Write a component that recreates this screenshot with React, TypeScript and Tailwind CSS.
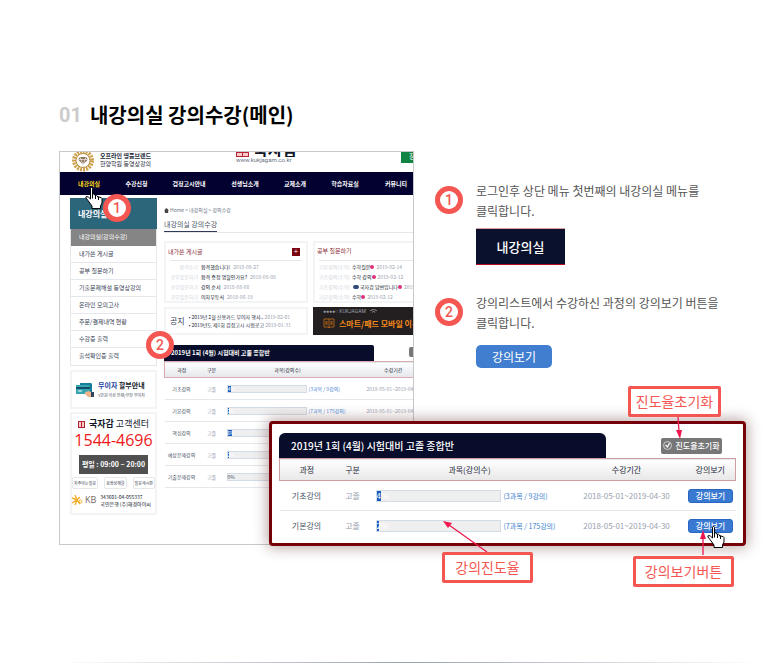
import { ReactNode } from "react";

interface Course {
  name: string;
  level: string;
  progress: string;
  percent: number;
  count: string;
  period: string;
}

const menus = [
  { label: "내강의실", width: "w-[52px]" },
  { label: "수강신청", width: "w-[43px]" },
  { label: "검정고시안내", width: "w-[62px]" },
  { label: "선생님소개", width: "w-[50px]" },
  { label: "교제소개", width: "w-[50px]" },
  { label: "학습자료실", width: "w-[50px]" },
  { label: "커뮤니티", width: "w-[52px]" },
];

const sideMenus = [
  "내가쓴 게시글",
  "공부 질문하기",
  "기출문제해설 동영상강의",
  "온라인 모의고사",
  "주문/결제내역 현황",
  "수강증 출력",
  "출석확인증 출력",
];

const myPosts = [
  { type: "합격수기", title: "합격했습니다!", date: "2018-08-27" },
  { type: "공부질문하기", title: "합격 증정 명찰인가요?", date: "2018-08-08" },
  { type: "공부질문하기", title: "강의 순서", date: "2018-08-08" },
  { type: "공부질문하기", title: "이차부등식", date: "2018-06-19" },
];

const questions = [
  { type: "기본강의(수학)", title: "수학질문", date: "2019-02-14", reply: false },
  { type: "기초강의(수학)", title: "수학 강의", date: "2019-02-12", reply: false },
  { type: "기초강의(수학)", title: "국자감 답변입니다", date: "2019-02-13", reply: true },
  { type: "기본강의(수학)", title: "수학", date: "2019-02-12", reply: false },
];

const courses: Course[] = [
  { name: "기초강의", level: "고졸", progress: "4%", percent: 4, count: "(3과목 / 9강의)", period: "2018-05-01~2019-04-30" },
  { name: "기본강의", level: "고졸", progress: "2%", percent: 2, count: "(7과목 / 175강의)", period: "2018-05-01~2019-04-30" },
  { name: "핵심강의", level: "고졸", progress: "6%", percent: 6, count: "(7과목 / 98강의)", period: "2018-05-01~2019-04-30" },
  { name: "예상문제강의", level: "고졸", progress: "2%", percent: 2, count: "(7과목 / 84강의)", period: "2018-05-01~2019-04-30" },
  { name: "기출문제강의", level: "고졸", progress: "0%", percent: 0, count: "(7과목 / 84강의)", period: "2018-05-01~2019-04-30" },
];

const StepBadge = ({ children }: { children: ReactNode }) => (
  <span className="flex size-7 shrink-0 items-center justify-center rounded-full border-5 border-[#f45752] bg-white font-[Roboto,sans-serif] text-sm font-medium leading-none text-[#f45752]">
    {children}
  </span>
);

const Callout = ({ children }: { children: ReactNode }) => (
  <p className="whitespace-nowrap rounded-xs border-3 border-[#f45752] bg-white text-center text-sm leading-[25px] text-[#f45752]">
    {children}
  </p>
);

const HandCursor = () => (
  <svg viewBox="0 0 18 22" className="h-[22px] w-[18px]" aria-hidden="true">
    <path
      d="M5.5 1.5q0-1 1-1t1 1v6q1-1.200 2.500 0v1q1.500-1 2.500.5v1q1.500-.8 2.500.5 1.200-.6 2 1v4.500l-1.500 3v2.500h-8.500v-2.500l-4-5.500-2-2.500q-.5-1.500.8-1.500 1.500 0 3.700 2.500z"
      fill="#fff"
      stroke="#000"
      strokeLinejoin="round"
    />
    <path d="M7.500 7v4.500M10.500 8v4M13.500 10v3" fill="none" stroke="#000" />
  </svg>
);

const Emblem = () => (
  <svg viewBox="0 0 24 20" className="h-5 w-6" aria-hidden="true">
    <circle cx="12" cy="8.500" r="9" fill="none" stroke="#cda24c" strokeWidth="4" strokeDasharray="2 1" />
    <circle cx="12" cy="8.500" r="7" fill="#fff" stroke="#b58a38" />
    <path d="M9 5h6l2 2.500-5 5-5-5z" fill="#8b765a" />
    <path d="M9 5l3 7.500L15 5M7 7.500h10" fill="none" stroke="#fff" strokeWidth=".6" />
  </svg>
);

const ProgressBar = ({ course, className }: { course: Course; className: string }) => (
  <span className={`relative block shrink-0 border border-[#d3dbe6] bg-[#efefef] ${className}`}>
    <span className="absolute inset-y-0 left-0 bg-[#1b5dbd]" style={{ width: `${course.percent}%` }} />
    <span className={`absolute inset-0 flex items-center ${course.percent ? "text-white" : "text-gray-600"}`}>
      {course.progress}
    </span>
  </span>
);

const PostList = ({ children }: { children: ReactNode }) => (
  <ul className="mx-1 border-t border-gray-200 pt-px text-[5px] leading-[10px] text-gray-400">{children}</ul>
);

const Sidebar = () => (
  <aside className="w-[87px] shrink-0 whitespace-nowrap">
    <h3 className="h-[31px] bg-[#2c667b] pl-2 text-[8px] font-bold leading-[31px] text-white">내강의실</h3>
    <nav className="border border-t-0 border-gray-200 text-[6px] leading-4 text-gray-700">
      <a href="#list" className="block h-[17px] bg-[#858585] pl-2 text-white">내강의실(강의수강)</a>
      {sideMenus.map((menu) => (
        <a key={menu} href="#menu" className="block h-[17px] border-b border-gray-200 pl-2 last:border-b-0">
          {menu}
        </a>
      ))}
    </nav>

    {/* 무이자 할부 */}
    <div className="mt-1 flex h-[39px] items-center gap-1 border-2 border-gray-100 pl-1">
      <svg viewBox="0 0 18 16" className="h-4 w-[18px] shrink-0" aria-hidden="true">
        <path d="M4 1h11l1 1v8H4z" fill="#187e98" />
        <path d="M0 3h13l1 1v8H0z" fill="#33a6b1" />
        <path d="M0 5h14v2H0z" fill="#164c68" />
        <path d="M9 10l4-1 3 2v4h-4l-3-3z" fill="#efb48d" />
        <path d="M15 10h3v5h-3z" fill="#31465f" />
        <path d="M2 9h4" stroke="#fff" />
      </svg>
      <div>
        <p className="text-[7px] font-bold leading-[11px] text-gray-900">
          <span className="text-[#2342a0]">무이자</span> 할부안내
        </p>
        <p className="text-[4px] leading-[9px] text-gray-600">5만원 이상 전체/부분 무이자</p>
      </div>
    </div>

    {/* 고객센터 */}
    <div className="mt-[3px] h-[103px] border-2 border-gray-100 pt-1 text-gray-900">
      <div className="flex items-center justify-center gap-1 text-[9px] leading-3">
        <span className="grid size-[7px] grid-cols-2 gap-px bg-[#ae2435] p-px">
          <i className="border border-red-200" /><i className="border border-red-200" />
        </span>
        <span><b>국자감</b> 고객센터</span>
      </div>
      <p className="text-center font-['Open_Sans',sans-serif] text-base leading-5 text-[#ee1717]">1544-4696</p>
      <p className="mx-[7px] mt-[5px] bg-[#505050] text-center text-[7px] font-bold leading-[19px] text-white">평일 : 09:00 ~ 20:00</p>
      <div className="mt-[3px] flex justify-between text-[4px] leading-[10px] text-gray-700">
        <button className="rounded-xs border border-gray-200 px-px">자주하는질문</button>
        <button className="rounded-xs border border-gray-200 px-px">동영상해결</button>
        <button className="rounded-xs border border-gray-200 px-px">질문게시판</button>
      </div>
      <div className="mt-1 flex items-center gap-[2px]">
        <svg viewBox="0 0 11 10" className="h-[10px] w-[11px] shrink-0" aria-hidden="true">
          <path d="M0 3l5 2 3-3M0 8l5-3 3 4M3 0l2 5-2 5" fill="none" stroke="#f4ad28" strokeWidth="1.400" />
          <circle cx="8.500" cy="6.500" r="1.500" fill="none" stroke="#f4ad28" />
        </svg>
        <span className="font-['Open_Sans',sans-serif] text-[9px] leading-3 text-[#76695d]">KB</span>
        <p className="ml-[2px] text-[5px] leading-[7px]">343601-04-055337<br />국민은행 (주)해경아이씨</p>
      </div>
    </div>
  </aside>
);

const LectureRoom = () => (
  <div className="w-[355px] overflow-hidden border border-[#c8c8c8] bg-white">
    <div className="w-[400px]">
      <header className="flex h-5 items-start">
        <div className="flex w-[176px] gap-[5px] pl-[11px]">
          <Emblem />
          <p className="text-[6px] leading-2 text-gray-800"><b>오프라인 명품브랜드</b><br />한양학원 동영상강의</p>
        </div>
        <div className="w-[165px]">
          <div className="flex h-[5px] items-end gap-1 overflow-hidden">
            <span className="grid h-[5px] w-[13px] grid-cols-2 gap-px bg-[#b32334] p-px">
              <i className="bg-red-200" /><i className="bg-red-200" />
            </span>
            <b className="text-base leading-4 text-gray-900">국자감</b>
          </div>
          <p className="font-[Roboto,sans-serif] text-[6px] leading-[6px] text-gray-500">www.kukjagam.co.kr</p>
        </div>
        <span className="h-[11px] w-6 bg-[#128342] pl-2 text-[7px] leading-[9px] text-white">장</span>
      </header>

      <nav className="flex h-[23px] items-center bg-[#020130] pl-[3px] text-[6px] font-bold text-white">
        {menus.map((menu, index) => (
          <a key={menu.label} href="#menu" className={`${menu.width} text-center ${index === 0 ? "text-[#ffdc1b]" : ""}`}>
            {menu.label}
          </a>
        ))}
      </nav>

      <div className="flex gap-[7px] pb-[29px] pl-[10px] pt-[3px]">
        <Sidebar />

        <main className="w-[290px] shrink-0">
          <p className="flex items-center gap-px pt-2 text-[5px] leading-2 text-gray-500">
            <svg viewBox="0 0 6 6" className="size-[5px]" aria-hidden="true"><path d="M3 0l3 3H5v3H1V3H0z" fill="#444" /></svg>
            Home &gt; 내강의실 &gt; 강의수강
          </p>
          <h3 className="mt-[3px] border-b border-gray-200 text-[7px] leading-[14px] text-gray-600">
            <span className="inline-block border-b border-[#30385c]">내강의실 강의수강</span>
          </h3>

          <div className="mt-2 flex gap-[5px]">
            <section className="h-[62px] w-[144px] shrink-0 border-2 border-gray-100">
              <div className="flex h-[17px] items-center justify-between px-[2px]">
                <h4 className="text-[6px] text-[#8b2d35]">내가쓴 게시글</h4>
                <button aria-label="더보기" className="mr-1 flex size-2 items-center justify-center bg-[#7b0610] text-[7px] leading-none text-white">+</button>
              </div>
              <PostList>
                {myPosts.map((post) => (
                  <li key={post.title} className="flex gap-[3px] whitespace-nowrap">
                    <span className="w-[28px] text-right text-gray-300">{post.type}</span>
                    <span className="text-gray-900">{post.title}</span>
                    <span>{post.date}</span>
                  </li>
                ))}
              </PostList>
            </section>
            <section className="h-[62px] w-[141px] shrink-0 border-2 border-gray-100">
              <h4 className="h-[17px] pl-[2px] text-[6px] leading-[15px] text-[#8b2d35]">공부 질문하기</h4>
              <PostList>
                {questions.map((post) => (
                  <li key={post.title} className="flex items-center whitespace-nowrap">
                    <span className="mr-[2px] text-gray-300">{post.type}</span>
                    {post.reply && <span className="mx-px h-1 w-[6px] rounded-xs bg-[#324c79]" />}
                    <span className="text-gray-900">{post.title}</span>
                    <span className="mr-[2px] size-1 rounded-full bg-[#df307a]" />
                    <span>{post.date}</span>
                  </li>
                ))}
              </PostList>
            </section>
          </div>

          <div className="mt-1 flex gap-[5px]">
            <section className="flex h-7 w-[144px] shrink-0 items-center gap-1 border-2 border-gray-100 pl-1">
              <h4 className="text-[8px] text-gray-700">공지</h4>
              <ul className="whitespace-nowrap text-[5px] leading-2 text-gray-800">
                <li>• 2019년 2월 신용카드 무이자 행사.. <span className="text-gray-400">2019-02-01</span></li>
                <li>• 2019년도 제1회 검정고시 시험공고 <span className="text-gray-400">2019-01-31</span></li>
              </ul>
            </section>
            <a href="#mobile" className="h-7 w-[141px] shrink-0 bg-[#231e1f] px-[10px] pt-px">
              <span className="flex items-center gap-1 font-[Roboto,sans-serif] text-[5px] leading-[7px] text-gray-400">
                ●●●●○ KUKJAGAM
                <svg viewBox="0 0 8 6" className="h-[5px] w-[7px]" aria-hidden="true"><path d="M0 2q4-3 8 0M2 4q2-2 4 0" fill="none" stroke="#aaa" /></svg>
              </span>
              <span className="flex items-center gap-1 whitespace-nowrap text-[8px] font-bold leading-[17px] text-[#f58b1b]">
                <svg viewBox="0 0 12 11" className="h-[11px] w-3" aria-hidden="true">
                  <path d="M6 1H1v8h4l1 1 1-1h4V1H6zv9M3 3v4M4 3v4M8 3v4M9 3v4" fill="none" stroke="#a85f18" />
                </svg>
                스마트/패드 모바일 이용
              </span>
            </a>
          </div>

          <div className="mt-[10px] flex justify-between">
            <h4 className="h-4 w-[210px] rounded-t-xs bg-[#070d2b] pl-[7px] text-[6px] font-bold leading-4 text-white">
              2019년 1회 (4월) 시험대비 고졸 종합반
            </h4>
            <button aria-label="초기화" className="mr-[5px] mt-[2px] h-[10px] w-10 rounded-xs bg-[#777]" />
          </div>
          <table className="w-[272px] table-fixed text-center text-[5px] text-gray-600">
            <colgroup>
              <col className="w-[34px]" /><col className="w-[26px]" /><col className="w-[126px]" /><col className="w-[86px]" />
            </colgroup>
            <thead>
              <tr className="h-4 border border-[#dcabb0] bg-linear-to-b from-white to-gray-200 text-gray-800">
                <th className="p-0 font-normal">과정</th>
                <th className="p-0 font-normal">구분</th>
                <th className="p-0 font-normal">과목(강의수)</th>
                <th className="p-0 font-normal">수강기간</th>
              </tr>
            </thead>
            <tbody>
              {courses.map((course) => (
                <tr key={course.name} className="h-[22px] border-b border-gray-200">
                  <td className="whitespace-nowrap p-0">{course.name}</td>
                  <td className="p-0 text-gray-400">{course.level}</td>
                  <td className="p-0 pl-[2px]">
                    <div className="flex items-center gap-[2px]">
                      <ProgressBar course={course} className="h-2 w-20" />
                      <span className="whitespace-nowrap text-[#4989d6]">{course.count}</span>
                    </div>
                  </td>
                  <td className="p-0 text-gray-400">{course.period}</td>
                </tr>
              ))}
            </tbody>
          </table>
        </main>
      </div>
    </div>
  </div>
);

const CourseListDetail = () => (
  <section className="h-[125px] w-[477px] rounded-sm border-3 border-[#750007] bg-white px-[7px] pt-[9px] shadow-[0_0_14px_2px_rgba(90,40,40,0.4)]">
    <div className="flex items-center justify-between">
      <h3 className="h-[25px] w-[327px] rounded-t-md bg-[#070d2b] pl-3 text-[10px] font-medium leading-[26px] text-white">
        2019년 1회 (4월) 시험대비 고졸 종합반
      </h3>
      <button className="mr-[14px] flex h-4 w-[61px] items-center justify-center gap-[3px] whitespace-nowrap rounded-xs bg-[#777] text-[8px] font-medium text-white">
        <svg viewBox="0 0 9 9" className="size-[9px] shrink-0" aria-hidden="true">
          <circle cx="4.500" cy="4.500" r="4" fill="none" stroke="#ccc" />
          <path d="M2.500 4l2 2 2-4" fill="none" stroke="#fff" strokeWidth="1.200" />
        </svg>
        진도율초기화
      </button>
    </div>
    <table className="w-full table-fixed border-collapse text-center text-[8px] leading-3 text-gray-600">
      <colgroup>
        <col className="w-[54px]" /><col className="w-[38px]" /><col className="w-[196px]" /><col className="w-[118px]" /><col />
      </colgroup>
      <thead>
        <tr className="h-[22px] border border-[#cf9c9f] bg-linear-to-b from-white to-[#e8e8e8] text-gray-800">
          <th className="p-0 font-normal">과정</th>
          <th className="p-0 font-normal">구분</th>
          <th className="p-0 font-normal">과목(강의수)</th>
          <th className="p-0 font-normal">수강기간</th>
          <th className="p-0 font-normal">강의보기</th>
        </tr>
      </thead>
      <tbody>
        {courses.slice(0, 2).map((course) => (
          <tr key={course.name} className="h-[30px] border-b border-gray-200 last:border-b-0">
            <td className="p-0">{course.name}</td>
            <td className="p-0 text-gray-400">{course.level}</td>
            <td className="p-0 pl-1">
              <div className="flex items-center gap-[3px]">
                <ProgressBar course={course} className="h-3 w-[125px]" />
                <span className="whitespace-nowrap text-[7px] text-[#3d7fd0]">{course.count}</span>
              </div>
            </td>
            <td className="p-0 text-gray-400">{course.period}</td>
            <td className="p-0">
              <button className="h-[14px] w-[45px] rounded-[3px] border border-[#2767c3] bg-[#3979d1] align-middle font-medium leading-[11px] text-white">강의보기</button>
            </td>
          </tr>
        ))}
      </tbody>
    </table>
  </section>
);

const App: React.FC = () => {
  return (
    <div className="bg-white pl-[59px] pt-[99px] font-['Noto_Sans_CJK_KR',sans-serif]">
      <h1 className="flex items-center gap-2 text-xl font-bold leading-8 text-black">
        <span className="font-[Roboto,sans-serif] text-[#ccc]">01</span>
        <span>내강의실 강의수강(메인)</span>
      </h1>

      <div className="relative mt-5 flex gap-[21px]">
        <div className="shrink-0">
          <LectureRoom />
        </div>

        {/* 설명 */}
        <ol className="flex-1 pt-[30px] text-[12px] leading-5 text-[#555]">
          <li className="flex gap-[13px]">
            <div className="pt-[5px]"><StepBadge>1</StepBadge></div>
            <div>
              <p>로그인후 상단 메뉴 첫번째의 내강의실 메뉴를<br />클릭합니다.</p>
              <button className="mt-[7px] block h-[37px] w-[89px] border-y border-t-[#e0a0a0] border-b-[#b40c20] bg-[#0a112d] text-[13px] font-medium text-white">내강의실</button>
            </div>
          </li>
          <li className="mt-7 flex gap-[13px]">
            <div className="pt-[5px]"><StepBadge>2</StepBadge></div>
            <div>
              <p>강의리스트에서 수강하신 과정의 강의보기 버튼을<br />클릭합니다.</p>
              <button className="mt-3 block h-[23px] w-[76px] rounded-[5px] bg-[#417ecf] text-white">강의보기</button>
            </div>
          </li>
        </ol>

        {/* 캡처 위 표시 */}
        <div className="absolute left-[44px] top-[43px]"><StepBadge>1</StepBadge></div>
        <div className="absolute left-[26px] top-[36px]"><HandCursor /></div>
        <div className="absolute left-[87px] top-[180px]"><StepBadge>2</StepBadge></div>
        <div className="absolute left-[210px] top-[270px]"><CourseListDetail /></div>
        <div className="absolute left-[569px] top-[235px] w-[93px]"><Callout>진도율초기화</Callout></div>
        <div className="absolute left-[383px] top-[401px] w-[91px]"><Callout>강의진도율</Callout></div>
        <div className="absolute left-[574px] top-[405px] w-[101px]"><Callout>강의보기버튼</Callout></div>
        <svg viewBox="0 0 300 150" className="absolute left-[380px] top-[260px] h-[150px] w-[300px]" aria-hidden="true">
          <path d="M239 6l1 15M48 141L10 114M264 144v-18" fill="none" stroke="#ee1750" strokeWidth="1.300" />
          <path d="M237 19h6l-2 9zM4 110l9 2-4 5zM261 128l3-9 3 9z" fill="#ee1750" />
        </svg>
        <div className="absolute left-[648px] top-[375px]"><HandCursor /></div>
      </div>

      <hr className="mr-[20px] mt-[117px] h-px border-0 bg-linear-to-r from-transparent via-gray-400 to-transparent" />
    </div>
  );
};

export default App;
